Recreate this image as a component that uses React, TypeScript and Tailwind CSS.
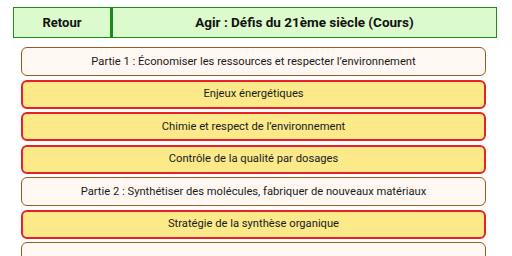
import React from "react";

const rows: { label: string; kind: "part" | "item" }[] = [
  { label: "Partie 1 : Économiser les ressources et respecter l’environnement", kind: "part" },
  { label: "Enjeux énergétiques", kind: "item" },
  { label: "Chimie et respect de l’environnement", kind: "item" },
  { label: "Contrôle de la qualité par dosages", kind: "item" },
  { label: "Partie 2 : Synthétiser des molécules, fabriquer de nouveaux matériaux", kind: "part" },
  { label: "Stratégie de la synthèse organique", kind: "item" },
  { label: "", kind: "part" },
];

export default function App() {
  return (
    <div
      className="w-[512px] h-[256px] overflow-hidden bg-white"
      style={{ fontFamily: "Roboto, 'Liberation Sans', sans-serif" }}
    >
      <div className="pt-[7px] pl-[13px] pr-[15px] flex h-[38px]">
        <div className="w-[98px] h-[31px] flex items-center justify-center bg-[#dcfbcc] border-[1.5px] border-[#1d8a1d] text-[13px] font-bold text-[#111]">
          Retour
        </div>
        <div className="flex-1 h-[31px] flex items-center justify-center bg-[#dcfbcc] border-[1.5px] border-l-[2px] border-[#1d8a1d] text-[13.5px] font-bold text-[#111]">
          Agir : Défis du 21ème siècle (Cours)
        </div>
      </div>
      <div className="pl-[21px] pr-[26px] pt-[9px] flex flex-col gap-[3.5px]">
        {rows.map((r, i) => (
          <div
            key={i}
            className={
              r.kind === "part"
                ? "h-[29px] shrink-0 flex items-center justify-center pt-[1px] rounded-[6px] bg-[#fff8f2] border-[1.5px] border-[#9a5a1e] text-[11.2px] text-[#1a1a1a]"
                : "h-[29px] shrink-0 flex items-center justify-center pt-[1px] rounded-[6px] bg-[#fbe98a] border-[2px] border-[#e8202a] text-[11.2px] text-[#1a1a1a]"
            }
          >
            {r.label}
          </div>
        ))}
      </div>
    </div>
  );
}
